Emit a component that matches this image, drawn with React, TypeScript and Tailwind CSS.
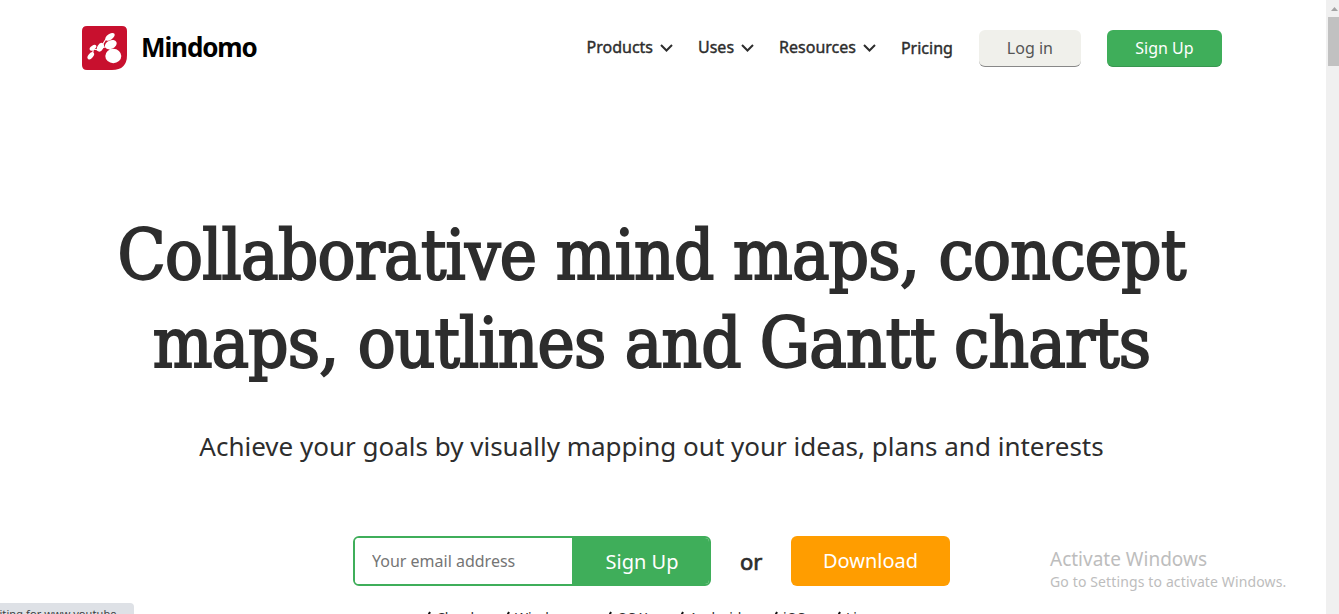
const navItems = [
  { label: 'Products', className: 'ml-0' },
  { label: 'Uses', className: 'ml-6' },
  { label: 'Resources', className: 'ml-6' },
];

const platforms = [
  { label: 'Cloud', className: 'w-[79px]' },
  { label: 'Windows', className: 'w-[102px]' },
  { label: 'OS X', className: 'w-[72px]' },
  { label: 'Android', className: 'w-[94px]' },
  { label: 'iOS', className: 'w-[63px]' },
  { label: 'Linux', className: 'w-[60px]' },
];

function Logo() {
  return (
    <a className="flex items-center">
      <svg width="45" height="44" viewBox="0 0 45 44">
        <path d="M5 0H40Q45 0 45 5V29Q45 44 30 44H5Q0 44 0 39V5Q0 0 5 0Z" fill="#c8102e" />
        <g fill="#fff">
          <ellipse cx="31.3" cy="30" rx="8" ry="7.2" />
          <ellipse cx="28.8" cy="18.6" rx="6.2" ry="4.2" transform="rotate(-25 28.8 18.6)" />
          <ellipse cx="28" cy="10.8" rx="5.4" ry="2.9" transform="rotate(-35 28 10.8)" />
          <ellipse cx="18.4" cy="21.2" rx="4.7" ry="3" transform="rotate(-60 18.4 21.2)" />
          <ellipse cx="11" cy="21.8" rx="3.8" ry="2.1" transform="rotate(-35 11 21.8)" />
          <ellipse cx="8.8" cy="29.8" rx="4.2" ry="2.4" transform="rotate(-50 8.8 29.8)" />
        </g>
        <path d="M9 29Q12 26 10.8 22M10.8 23L17 24L24 13M19 22L27 20L29 26" fill="none" stroke="#fff" strokeWidth="1.2" />
      </svg>
      <span className="ml-[14px] pb-px text-[26px] leading-[43px] font-bold tracking-[-1.1px] text-black">Mindomo</span>
    </a>
  );
}

function Chevron() {
  return (
    <svg className="mt-[3px] ml-1.5" width="15" height="10" viewBox="0 0 15 10">
      <path d="M2 2L7.5 7.5L13 2" fill="none" stroke="#2d2d2d" strokeWidth="2" />
    </svg>
  );
}

function Header() {
  return (
    <header className="mt-[27px] flex h-[41px] items-center pl-[82px]">
      <div className="w-[504.5px]"><Logo /></div>
      <nav className="flex items-center text-base text-[#2d2d2d]">
        {navItems.map((item) => (
          <a key={item.label} className={`flex items-center pb-0.5 [-webkit-text-stroke:0.4px_#2d2d2d] ${item.className}`}>
            {item.label}
            <Chevron />
          </a>
        ))}
        <a className="ml-6 [-webkit-text-stroke:0.4px_#2d2d2d]">Pricing</a>
      </nav>
      <a className="mt-0.5 ml-[26px] flex h-[37px] w-[102px] items-center justify-center rounded-md border-b border-[#888] bg-[#f0f0eb] text-base text-[#555]">Log in</a>
      <a className="mt-0.5 ml-[26px] flex h-[37px] w-[115px] items-center justify-center rounded-md border-b border-[#389650] bg-[#3fae5a] text-base text-white">Sign Up</a>
    </header>
  );
}

export default function App() {
  return (
    <div className="relative flex h-[614px] w-[1339px] overflow-hidden bg-white font-['Noto_Sans',sans-serif] text-[#2d2d2d]">
      <div className="w-[1326px]">
        <Header />
        <main className="w-[1303px]">
          <h1 className="mt-[143px] text-center font-['DejaVu_Serif_Condensed','DejaVu_Serif',serif] text-[70px] leading-[88px] whitespace-nowrap text-[#2d2d2d] [-webkit-text-stroke:2px_#2d2d2d]">
            <span className="block tracking-[-0.7px]">Collaborative mind maps, concept</span>
            <span className="block tracking-[-0.8px]">maps, outlines and Gantt charts</span>
          </h1>
          <p className="mt-10 text-center text-[26px] leading-[38px]">
            Achieve your goals by visually mapping out your ideas, plans and interests
          </p>
          <div className="mt-[71px] flex h-[50px] items-center pl-[353px]">
            <div className="flex h-[50px] w-[358px] overflow-hidden rounded-md border-2 border-[#3fae5a]">
              <input className="w-[217px] bg-white px-[17px] text-base placeholder:text-[#757575]" placeholder="Your email address" />
              <button className="flex-1 bg-[#3fae5a] pt-0.5 pl-[3px] text-xl text-white">Sign Up</button>
            </div>
            <span className="ml-[29px] w-[51px] text-[22px] [-webkit-text-stroke:0.7px_#2d2d2d]">or</span>
            <a className="flex h-[50px] w-[159px] items-center justify-center rounded-md bg-[#ff9d00] text-xl text-white">Download</a>
          </div>
          <ul className="mt-[22px] flex pl-[423px] text-sm leading-5">
            {platforms.map((p) => (
              <li key={p.label} className={`flex shrink-0 items-start ${p.className}`}>
                <svg className="mt-[3px] mr-1" width="9" height="10" viewBox="0 0 9 10">
                  <path d="M1 6L3 9L7 1" fill="none" stroke="#111" strokeWidth="2" />
                </svg>
                {p.label}
              </li>
            ))}
          </ul>
        </main>
      </div>
      <div className="flex w-[13px] flex-col items-end bg-[#f0f0f0]">
        <svg width="13" height="17" viewBox="0 0 13 17">
          <path d="M5 11L8.5 7L12 11Z" fill="#a3a3a3" />
        </svg>
        <div className="h-[49px] w-[11px] bg-[#c1c1c1]" />
      </div>
      <div className="absolute top-[546px] left-[1050px] whitespace-nowrap text-[#bdbdbd]">
        <div className="text-[19px] leading-[26px]">Activate Windows</div>
        <div className="text-sm leading-5 tracking-[0.13px]">Go to Settings to activate Windows.</div>
      </div>
      <div className="absolute top-[603px] left-0 h-[11px] w-[134px] overflow-hidden rounded-tr bg-[#dee1e6]">
        <div className="-ml-[17px] pt-0.5 text-[11px] leading-[18px] tracking-[0.1px] whitespace-nowrap text-[#3c4043]">Waiting for www.youtube...</div>
      </div>
    </div>
  );
}
